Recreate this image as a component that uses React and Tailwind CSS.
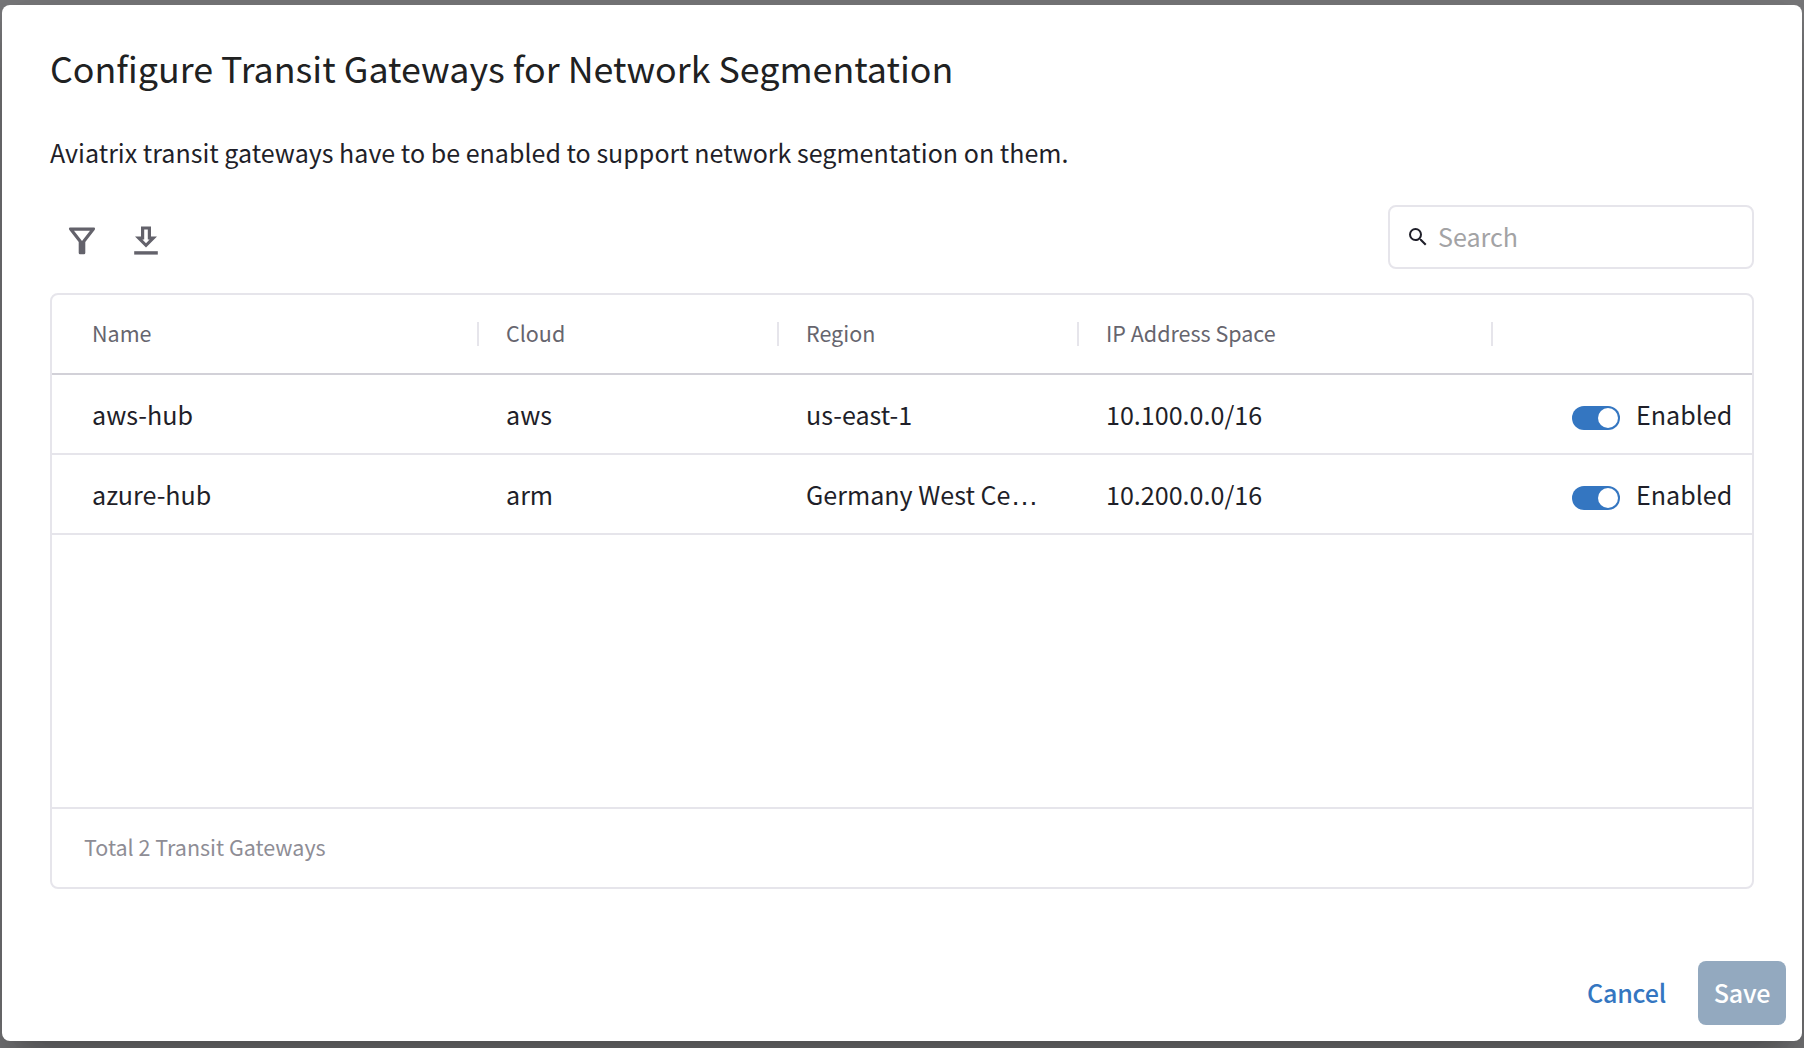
import React from 'react';

const cols = 'grid grid-cols-[427px_300px_300px_414px_1fr] items-center';

function FilterIcon() {
  return (
    <svg width="28" height="28" viewBox="0 0 28 28" className="text-[#63626b]">
      <path
        fill="currentColor"
        fillRule="evenodd"
        d="M1.6 0.6H26.4Q27.6 1.4 26.8 2.8L17.3 15V26Q17.2 27.2 16 27.3H12Q10.8 27.2 10.7 26V15L1.2 2.8Q0.4 1.4 1.6 0.6ZM6 3.8L14 13.9L22 3.8Z"
      />
    </svg>
  );
}

function DownloadIcon() {
  return (
    <svg width="24" height="30" viewBox="0 0 24 30" className="text-[#63626b]">
      <path fill="currentColor" fillRule="evenodd" d="M7 0.4H17V10.6H23L12 21.6L1 10.6H7ZM10.2 3.4V13.6H8.4L12 17.2L15.6 13.6H13.8V3.4Z" />
      <path fill="currentColor" d="M0.2 25.2H23.8V28.6H0.2Z" />
    </svg>
  );
}

function SearchIcon() {
  return (
    <svg width="24" height="24" viewBox="0 0 24 24" className="mt-0.5 text-[#1f1f29]">
      <path
        fill="currentColor"
        d="M15.5 14h-.79l-.28-.27A6.471 6.471 0 0 0 16 9.5 6.5 6.5 0 1 0 9.5 16c1.61 0 3.09-.59 4.23-1.57l.27.28v.79l5 4.99L20.49 19l-4.99-5zm-6 0C7.01 14 5 11.99 5 9.5S7.01 5 9.5 5 14 7.01 14 9.5 11.99 14 9.5 14z"
      />
    </svg>
  );
}

function Toggle() {
  return (
    <span className="mt-2 flex h-6 w-12 items-center justify-end rounded-full bg-[#3476c1] p-[2px]">
      <span className="h-5 w-5 rounded-full bg-white" />
    </span>
  );
}

function Row({ name, cloud, region, ellipsis, ip }) {
  return (
    <div className={`${cols} h-20 border-b-2 border-[#e6e5eb] text-[25.1px] leading-[38px]`}>
      <div className="pl-10">{name}</div>
      <div className="pl-[27px]">{cloud}</div>
      <div className="whitespace-nowrap pl-[27px]">
        {region}
        {ellipsis && <span className="font-['Liberation_Sans',sans-serif] text-[28px] leading-none">…</span>}
      </div>
      <div className="pl-[27px]">{ip}</div>
      <div className="flex items-center gap-4 pl-[79px]">
        <Toggle />
        <span>Enabled</span>
      </div>
    </div>
  );
}

function HeaderCell({ children, first }) {
  return (
    <div className={`flex h-6 items-center border-r-2 border-[#e6e5eb] ${first ? 'pl-10' : 'pl-[27px]'}`}>
      <span className="-mt-0.5">{children}</span>
    </div>
  );
}

export default function App() {
  return (
    <div className="flex h-[1048px] w-[1804px] overflow-hidden bg-[#7a7a7c] px-[2px] pb-[7px] pt-[5px] font-['Noto_Sans_CJK_SC',sans-serif] text-[#1f1f29]">
      <div className="flex w-full flex-col rounded-lg bg-white shadow-[0_22px_30px_-14px_rgba(0,0,0,0.2),0_48px_76px_6px_rgba(0,0,0,0.14),0_18px_92px_16px_rgba(0,0,0,0.12)]">
        <div className="flex flex-col px-12 pt-8">
          <h1 className="h-[60px] whitespace-nowrap text-[35.8px] leading-[60px] text-[#202122]">
            Configure Transit Gateways for Network Segmentation
          </h1>
          <p className="mt-[35px] h-10 whitespace-nowrap text-[25.06px] leading-[40px]">
            Aviatrix transit gateways have to be enabled to support network segmentation on them.
          </p>
          <div className="mt-[33px] flex h-16 items-center justify-between">
            <div className="flex items-center gap-[38px] pl-[18px] pt-2">
              <FilterIcon />
              <DownloadIcon />
            </div>
            <div className="flex h-16 w-[366px] items-center gap-2 rounded-lg border-2 border-[#e6e5eb] px-4 pb-0.5">
              <SearchIcon />
              <span className="text-[25.1px] leading-[38px] text-[#a3a3a5]">Search</span>
            </div>
          </div>
          <div className="mt-6 flex h-[596px] flex-col rounded-lg border-2 border-[#e6e5eb]">
            <div className={`${cols} h-20 border-b-2 border-[#d2d1d8] text-[21.5px] text-[#66656e]`}>
              <HeaderCell first>Name</HeaderCell>
              <HeaderCell>Cloud</HeaderCell>
              <HeaderCell>Region</HeaderCell>
              <HeaderCell>IP Address Space</HeaderCell>
            </div>
            <Row name="aws-hub" cloud="aws" region="us-east-1" ip="10.100.0.0/16" />
            <Row name="azure-hub" cloud="arm" region="Germany West Ce" ellipsis ip="10.200.0.0/16" />
            <div className="mt-auto flex h-20 items-center border-t-2 border-[#e6e5eb] pb-0.5 pl-8 text-[21.5px] text-[#8e8d95]">
              Total 2 Transit Gateways
            </div>
          </div>
        </div>
        <div className="mt-[72px] flex h-16 items-center justify-end gap-8 pr-4 text-[25.1px] font-medium tracking-[-0.2px]">
          <button className="text-[#3476c1]">Cancel</button>
          <button className="h-16 w-[88px] rounded-lg bg-[#93a9bf] text-white">Save</button>
        </div>
      </div>
    </div>
  );
}
